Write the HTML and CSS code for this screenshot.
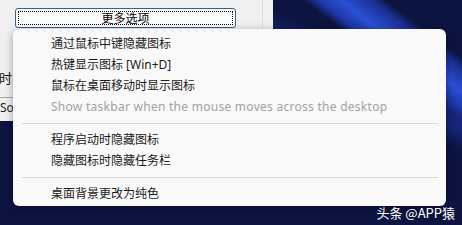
FILE: index.html
```html
<!DOCTYPE html>
<html lang="zh">
<head>
<meta charset="utf-8">
<link rel="stylesheet" href="styles.css">
</head>
<body>
<div class="desktop">
  <div class="window">
    <div class="topbar">
      <button class="more-btn"><span class="focus">更多选项</span></button>
      <div class="vline"></div>
    </div>
    <div class="row-text">时间</div>
    <div class="hline"></div>
    <div class="row-small">So:</div>
  </div>

  <div class="menu">
    <div class="item">通过鼠标中键隐藏图标</div>
    <div class="item">热键显示图标 [Win+D]</div>
    <div class="item">鼠标在桌面移动时显示图标</div>
    <div class="item disabled">Show taskbar when the mouse moves across the desktop</div>
    <div class="sep"></div>
    <div class="item">程序启动时隐藏图标</div>
    <div class="item">隐藏图标时隐藏任务栏</div>
    <div class="sep"></div>
    <div class="item">桌面背景更改为纯色</div>
  </div>

  <div class="watermark">头条 @APP猿</div>
</div>
</body>
</html>
```

FILE: styles.css
```css
* { box-sizing: border-box; }
html, body { margin: 0; padding: 0; }
body {
  width: 462px;
  height: 225px;
  overflow: hidden;
  font-family: "Noto Sans", "Noto Sans CJK SC", sans-serif;
}
.desktop {
  position: relative;
  width: 462px;
  height: 225px;
  background:
    linear-gradient(37deg, transparent 0 79%, #1d37a8 81%, #2b50d2 84%, #1b2f95 88%, transparent 90%),
    linear-gradient(20deg, transparent 0 62%, #17267c 67%, #14226e 74%, transparent 80%),
    linear-gradient(-40deg, transparent 0 83%, #1a2c88 85%, #2d55c8 89%, #1c2c80 93%, transparent 96%),
    #0d1440;
  overflow: hidden;
}
.window {
  position: absolute;
  left: 0;
  top: 0;
  width: 273px;
  height: 121px;
  background: #f0f0f0;
}
.topbar {
  height: 29px;
  display: flex;
  align-items: flex-start;
  padding: 8px 0 0 15px;
}
.more-btn {
  width: 221px;
  height: 20px;
  padding: 2px;
  margin: 0;
  border: 1px solid #3c5f86;
  border-radius: 3px;
  background: #fdfdfd;
  display: flex;
}
.focus {
  flex: 1;
  border: 1px dotted #000;
  font-family: "Noto Sans CJK SC", sans-serif;
  font-size: 12px;
  line-height: 12px;
  color: #000;
  display: flex;
  align-items: center;
  justify-content: center;
}
.vline {
  margin-left: 26px;
  margin-top: -8px;
  width: 1px;
  height: 29px;
  background: #dcdcdc;
}
.row-text {
  margin-top: 41px;
  margin-left: -1px;
  font-family: "Noto Sans CJK SC", sans-serif;
  font-size: 13px;
  line-height: 16px;
  color: #111;
}
.hline {
  margin-top: 11px;
  height: 1px;
  width: 100%;
  background: #a8a8a8;
}
.row-small {
  margin-top: 2px;
  font-family: "Noto Sans", sans-serif;
  font-size: 12px;
  line-height: 16px;
  color: #222;
}
.menu {
  position: absolute;
  left: 13px;
  top: 29px;
  width: 433px;
  height: 177px;
  background: #f9f9f9;
  border-radius: 6px;
  box-shadow: 0 2px 8px rgba(0,0,0,0.35);
  padding: 4px 0 2px;
  display: flex;
  flex-direction: column;
}
.item {
  height: 21px;
  line-height: 21px;
  padding-left: 38px;
  font-size: 12px;
  color: #1b1b1b;
  white-space: nowrap;
}
.item.disabled {
  color: #a2a2a2;
  letter-spacing: 0.27px;
}
.sep {
  height: 12px;
  display: flex;
  align-items: center;
  padding: 0 8px 0 9px;
}
.sep::before {
  content: "";
  flex: 1;
  height: 1px;
  background: #d9d9d9;
}
.watermark {
  position: absolute;
  right: 7px;
  bottom: 5px;
  font-family: "Noto Sans CJK SC", sans-serif;
  font-size: 13px;
  line-height: 15px;
  color: #fff;
}
```
